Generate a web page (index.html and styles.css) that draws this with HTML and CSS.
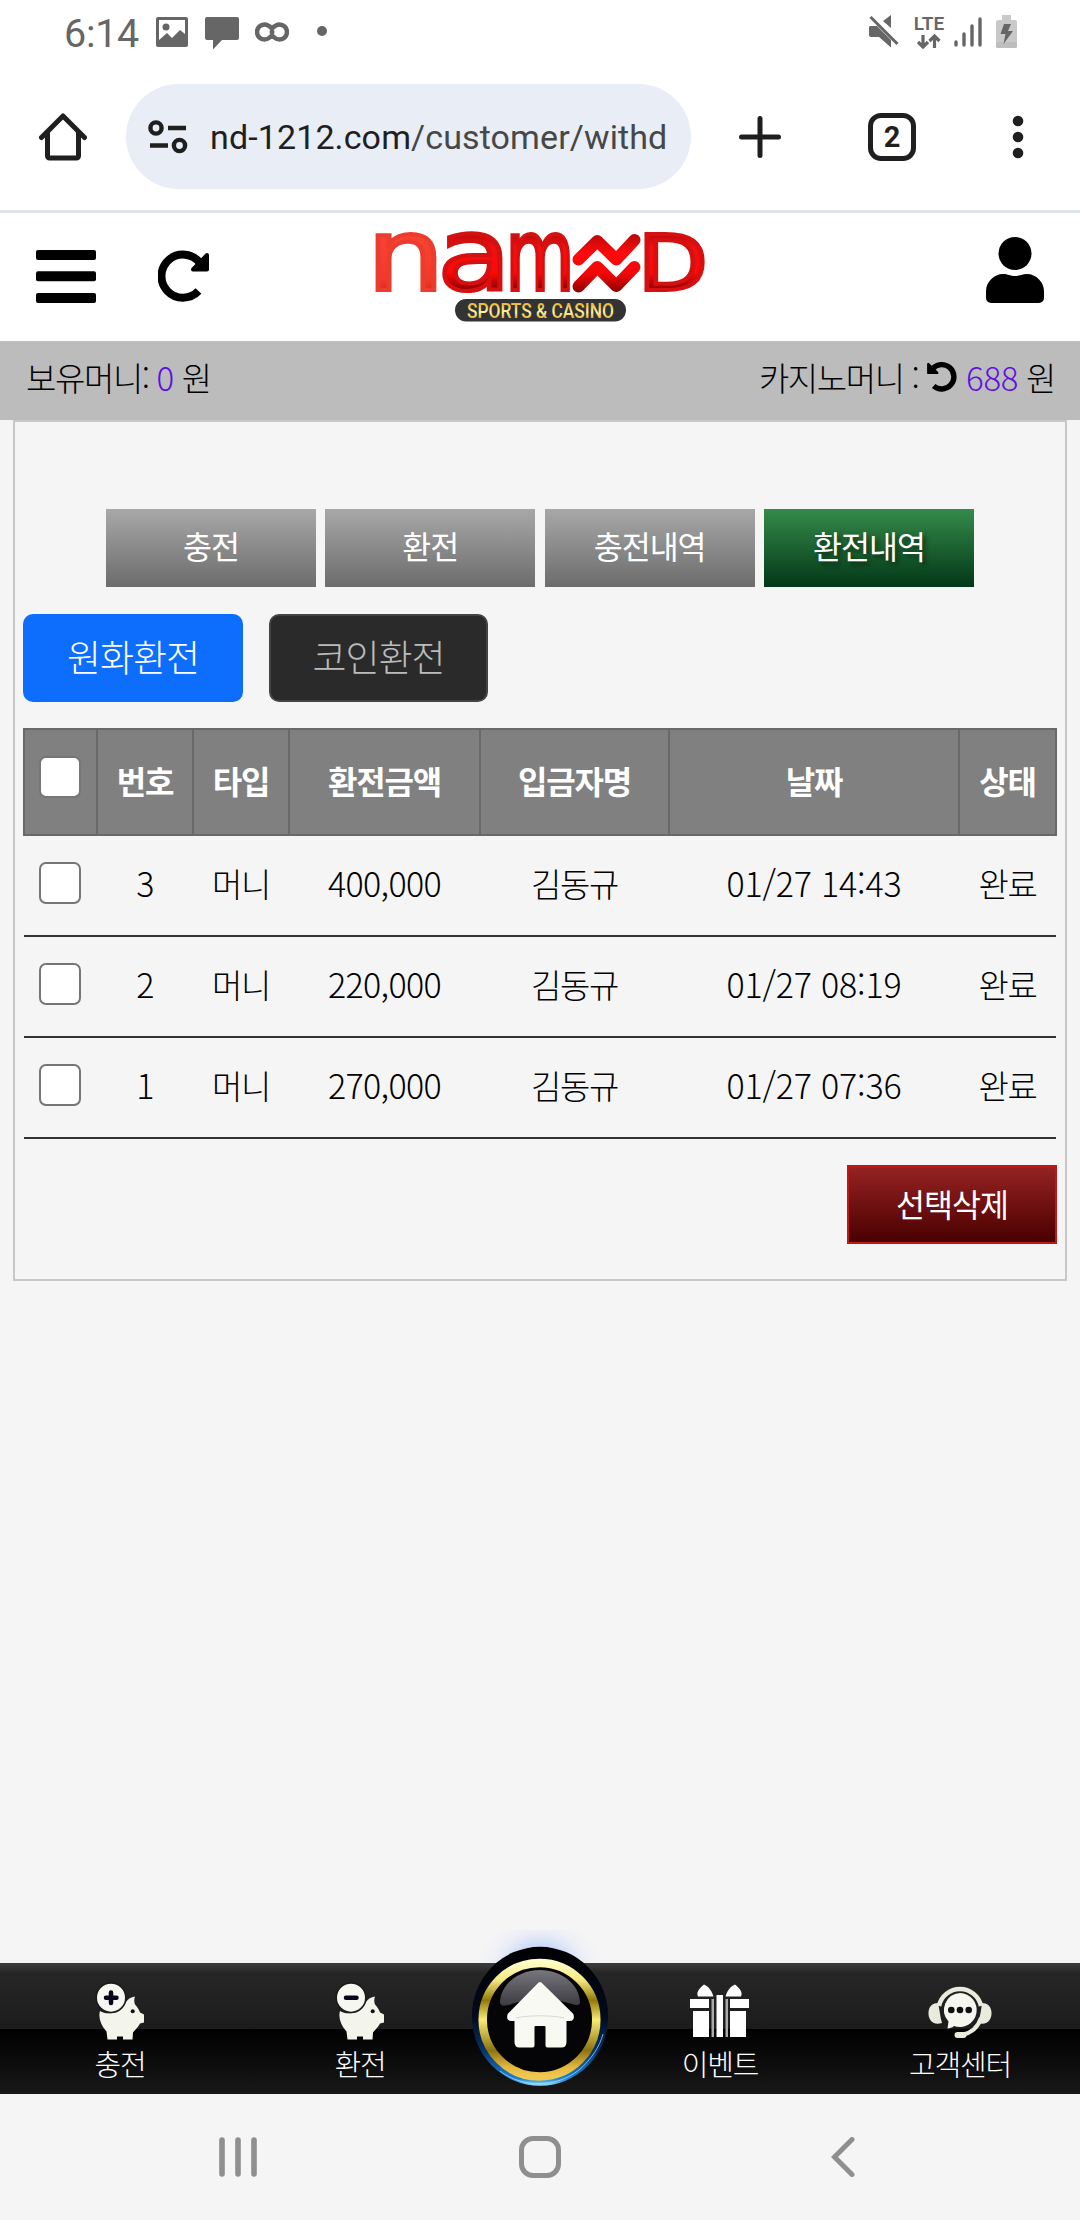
FILE: index.html
```html
<!DOCTYPE html>
<html lang="ko">
<head>
    <meta charset="UTF-8">
    <meta name="viewport" content="width=device-width, initial-scale=1.0">
    <title>환전내역</title>
    <link rel="stylesheet" href="styles.css">
</head>
<body>
    <div class="status-bar">
        <span class="clock">6:14</span>
        <svg class="st-photo" width="32" height="30" viewBox="0 0 32 30">
            <path fill="#666" fill-rule="evenodd" d="M2 0h28a2 2 0 0 1 2 2v26a2 2 0 0 1-2 2H2a2 2 0 0 1-2-2V2a2 2 0 0 1 2-2zM3 3v20l8-7 5 5 8-8 5 4V3z"/>
            <circle cx="10" cy="10" r="3.5" fill="#666"/>
        </svg>
        <svg class="st-chat" width="34" height="33" viewBox="0 0 34 33">
            <path fill="#666" d="M2 0h30a2 2 0 0 1 2 2v19a2 2 0 0 1-2 2H17L8 32.500V23H2a2 2 0 0 1-2-2V2a2 2 0 0 1 2-2z"/>
        </svg>
        <svg class="st-loop" width="34" height="20" viewBox="0 0 34 20">
            <path fill="none" stroke="#666" stroke-width="4.500" d="M17 6.500C14 3.500 12 2.500 9.500 2.500a7.500 7.500 0 0 0 0 15C12 17.500 14 16.500 17 13.500c3 3 5 4 7.500 4a7.500 7.500 0 0 0 0-15C22 2.500 20 3.500 17 6.500z"/>
            <circle cx="17" cy="10" r="2.500" fill="#666"/>
        </svg>
        <span class="st-dot"></span>
        <div class="status-right">
            <svg width="30" height="33" viewBox="0 0 30 33">
                <path fill="#666" d="M1 11h7l14 14v7.500L10 22H2a2 2 0 0 1-2-2v-8zM22 0v13L14 6z"/>
                <path stroke="#666" stroke-width="3" d="M1.500 2l27 27"/>
            </svg>
            <div class="lte">
                <span>LTE</span>
                <svg width="24" height="15" viewBox="0 0 24 15">
                    <path fill="none" stroke="#666" stroke-width="3.200" d="M6 1v11M1 8l5 5 5-5M17.500 14V3M12.500 7l5-5 5 5"/>
                </svg>
            </div>
            <svg class="st-signal" width="28" height="30" viewBox="0 0 28 30">
                <path stroke="#666" stroke-width="3.400" stroke-linecap="round" d="M2 25v3M10 17v11M18 9v19M26 2v26"/>
            </svg>
            <svg class="st-battery" width="21" height="33" viewBox="0 0 21 33">
                <path fill="#c9c9c9" d="M6 0h9v5h4a2 2 0 0 1 2 2v24a2 2 0 0 1-2 2H2a2 2 0 0 1-2-2V7a2 2 0 0 1 2-2h4z"/>
                <path fill="#bdbdbd" d="M0 27h21v4a2 2 0 0 1-2 2H2a2 2 0 0 1-2-2z"/>
                <path fill="#666" d="M8 9h7l-3 7h5L7.500 29 9.500 19H4.500z"/>
            </svg>
        </div>
    </div>

    <div class="browser-bar">
        <svg class="ic-home" width="48" height="48" viewBox="0 0 48 48">
            <path fill="none" stroke="#1f1f1f" stroke-width="5" stroke-linecap="round" stroke-linejoin="round" d="M2.500 24.500L24 3l21.500 21.500M8.500 20v23a2 2 0 0 0 2 2h27a2 2 0 0 0 2-2V20"/>
        </svg>
        <div class="url">
            <svg width="40" height="34" viewBox="0 0 40 34">
                <g fill="none" stroke="#1f1f1f" stroke-width="4.400">
                    <circle cx="8" cy="8" r="5.600"/>
                    <circle cx="31.500" cy="25.500" r="5.600"/>
                    <path d="M20 8h18M2 25.500h18"/>
                </g>
            </svg>
            <span class="url-text">nd-1212.com<span>/customer/withd</span></span>
        </div>
        <svg class="ic-plus" width="42" height="42" viewBox="0 0 42 42">
            <path stroke="#1f1f1f" stroke-width="5" stroke-linecap="round" d="M21 2.500v37M2.500 21h37"/>
        </svg>
        <div class="tab-count">2</div>
        <svg class="ic-more" width="12" height="44" viewBox="0 0 12 44">
            <g fill="#1f1f1f"><circle cx="6" cy="6" r="5.300"/><circle cx="6" cy="22" r="5.300"/><circle cx="6" cy="38" r="5.300"/></g>
        </svg>
    </div>

    <header class="header">
        <div class="header-left">
            <svg width="60" height="53" viewBox="0 0 60 53">
                <rect width="60" height="10" rx="2"/><rect y="21.300" width="60" height="10" rx="2"/><rect y="43" width="60" height="10" rx="2"/>
            </svg>
            <svg width="52" height="52" viewBox="0 0 52 52">
                <path fill="none" stroke="#000" stroke-width="8" d="M40.500 41A21.500 21.500 0 1 1 42 13"/>
                <path stroke="#000" stroke-width="4" stroke-linejoin="round" d="M49 5v14.500H35z"/>
            </svg>
        </div>
        <svg class="logo" width="360" height="110" viewBox="360 220 360 110">
            <defs>
                <linearGradient id="redN" x1="0" y1="0" x2="0" y2="1">
                    <stop offset="0" stop-color="#ff4a38"/><stop offset="0.700" stop-color="#f23a2a"/><stop offset="1" stop-color="#a80f0a"/>
                </linearGradient>
                <linearGradient id="red" gradientUnits="userSpaceOnUse" x1="0" y1="-58" x2="0" y2="0">
                    <stop offset="0" stop-color="#b50808"/><stop offset="0.250" stop-color="#f01010"/><stop offset="0.700" stop-color="#ff0808"/><stop offset="1" stop-color="#8c0000"/>
                </linearGradient>
                <linearGradient id="redWave" gradientUnits="userSpaceOnUse" x1="0" y1="233" x2="0" y2="292">
                    <stop offset="0" stop-color="#b50808"/><stop offset="0.350" stop-color="#ff0a0a"/><stop offset="0.700" stop-color="#f00808"/><stop offset="1" stop-color="#8c0000"/>
                </linearGradient>
                <linearGradient id="gold" x1="0" y1="0" x2="0" y2="1">
                    <stop offset="0.200" stop-color="#e8b93c"/><stop offset="0.550" stop-color="#fff6a8"/><stop offset="0.850" stop-color="#dca92f"/>
                </linearGradient>
            </defs>
            <g class="logo-letters">
                <text class="n" transform="translate(367 290) scale(1.230 1)">n</text>
                <text transform="translate(437.500 290) scale(1.210 1)">a</text>
                <text transform="translate(505.500 290) scale(0.715 1)">m</text>
                <text class="d" transform="translate(638 290) scale(1.190 1)">D</text>
            </g>
            <g fill="none" stroke="url(#redWave)" stroke-width="12" stroke-linecap="round" stroke-linejoin="round">
                <path d="M578.500 259.500L597.300 241l19 18.500L634.500 240"/>
                <path d="M578.500 286.500L597.300 267l19 19L634.500 267"/>
            </g>
            <rect x="455" y="299" width="171" height="22.500" rx="11.200" fill="#333"/>
            <text class="logo-sub" x="467" y="317.500" textLength="147" lengthAdjust="spacingAndGlyphs">SPORTS &amp; CASINO</text>
        </svg>
        <svg class="ic-user" width="58" height="66" viewBox="0 0 58 66">
            <circle cx="29" cy="16.500" r="16.500"/>
            <path d="M17 37c5 0 7 2 12 2s7-2 12-2c9 0 17 8 17 17v7a5 5 0 0 1-5 5H5a5 5 0 0 1-5-5v-7c0-9 8-17 17-17z"/>
        </svg>
    </header>

    <div class="money-bar">
        <div>보유머니: <b>0</b> 원</div>
        <div>카지노머니 :
            <svg width="32" height="31" viewBox="0 0 52 52">
                <g transform="translate(52 0) scale(-1 1)">
                    <path fill="none" stroke="#000" stroke-width="9" d="M40 42A20.500 20.500 0 1 1 42 13"/>
                    <path stroke="#000" stroke-width="4" stroke-linejoin="round" d="M49 5v15H34z"/>
                </g>
            </svg>
            <b>688</b> 원</div>
    </div>

    <main class="panel">
        <div class="menu">
            <a>충전</a>
            <a>환전</a>
            <a>충전내역</a>
            <a class="active">환전내역</a>
        </div>

        <div class="types">
            <button class="on">원화환전</button>
            <button>코인환전</button>
        </div>

        <table class="list">
            <colgroup>
                <col class="c-check"><col class="c-no"><col class="c-type"><col class="c-amount"><col class="c-name"><col class="c-date"><col class="c-state">
            </colgroup>
            <thead>
                <tr>
                    <th><span class="check"></span></th>
                    <th>번호</th>
                    <th>타입</th>
                    <th>환전금액</th>
                    <th>입금자명</th>
                    <th>날짜</th>
                    <th>상태</th>
                </tr>
            </thead>
            <tbody>
                <tr>
                    <td><span class="check"></span></td>
                    <td class="num">3</td>
                    <td>머니</td>
                    <td class="num">400,000</td>
                    <td>김동규</td>
                    <td class="date">01/27 14:43</td>
                    <td>완료</td>
                </tr>
                <tr>
                    <td><span class="check"></span></td>
                    <td class="num">2</td>
                    <td>머니</td>
                    <td class="num">220,000</td>
                    <td>김동규</td>
                    <td class="date">01/27 08:19</td>
                    <td>완료</td>
                </tr>
                <tr>
                    <td><span class="check"></span></td>
                    <td class="num">1</td>
                    <td>머니</td>
                    <td class="num">270,000</td>
                    <td>김동규</td>
                    <td class="date">01/27 07:36</td>
                    <td>완료</td>
                </tr>
            </tbody>
        </table>

        <button class="btn-delete">선택삭제</button>
    </main>

    <nav class="bottom-nav">
        <a>
            <svg width="50" height="58" viewBox="0 0 50 58">
                <path fill="#f3f4ec" d="M5 29c8 5 20 2 26-9 2-3 5-5 9-5.500-1 3-1 5 0 8 2 2 4 5 5 8l4 2v8l-4 1c-2 4-5 6-7 9l-.500 7H28v-3h-6v3h-9.500l-1-8C6 43 3 36 5 29z"/>
                <circle cx="37.700" cy="29.300" r="2" fill="#111"/>
                <circle cx="16" cy="15.700" r="14.800" fill="#f6f7f0" stroke="#1a1a1a" stroke-width="1.600"/>
                <path stroke="#05051c" stroke-width="4.500" stroke-linecap="round" d="M11 15.700h10.500M16 10.500V21"/>
            </svg>
            <span>충전</span>
        </a>
        <a>
            <svg width="50" height="58" viewBox="0 0 50 58">
                <path fill="#f3f4ec" d="M5 29c8 5 20 2 26-9 2-3 5-5 9-5.500-1 3-1 5 0 8 2 2 4 5 5 8l4 2v8l-4 1c-2 4-5 6-7 9l-.500 7H28v-3h-6v3h-9.500l-1-8C6 43 3 36 5 29z"/>
                <circle cx="37.700" cy="29.300" r="2" fill="#111"/>
                <circle cx="16" cy="15.700" r="14.800" fill="#f6f7f0" stroke="#1a1a1a" stroke-width="1.600"/>
                <path stroke="#05051c" stroke-width="4.500" stroke-linecap="round" d="M11 15.700h10.500"/>
            </svg>
            <span>환전</span>
        </a>
        <div class="nav-gap"></div>
        <a>
            <svg width="62" height="58" viewBox="0 0 62 58">
                <g fill="#fff">
                    <path d="M24.500 14.500H9c-2-4 1-8 6-12 5 2 8 7 9.500 12zM36.500 14.500H52c2-4-1-8-6-12-5 2-8 7-9.500 12z"/>
                    <path d="M1 17h19v9H1zM41 17h19v9H41zM4 29h16v26H4zM41 29h16v26H41z"/>
                    <path d="M27.500 13h6.500v42h-6.500z"/>
                </g>
                <path fill="#aaa" d="M22.500 17h2.500v38h-2.500zM36.500 17H39v38h-2.500z"/>
            </svg>
            <span>이벤트</span>
        </a>
        <a>
            <svg width="64" height="58" viewBox="0 0 64 58">
                <g fill="none" stroke="#e9ebdd">
                    <path stroke-width="4.500" d="M11 24a21.500 21.500 0 0 1 42 0"/>
                    <path stroke-width="4" d="M53 36c-3 9-9 15-19 17"/>
                    <path stroke-width="6" stroke-linecap="round" d="M29.500 53h6"/>
                </g>
                <path fill="#e9ebdd" d="M10 21c2 8 2 14 4 20-9 3-14-3-13.500-11C1 24 5 21 10 21zM54 21c-1 8-2 14-4 20 9 3 14-3 13.500-11C63 24 59 21 54 21z"/>
                <path fill="#f5f6ee" d="M32 11a17 17 0 1 1-6 33c-2 2-4 2-6.500 2.500l1-7A17 17 0 0 1 32 11z"/>
                <g fill="#111"><circle cx="23.300" cy="28" r="3.300"/><circle cx="32" cy="28" r="3.300"/><circle cx="40.700" cy="28" r="3.300"/></g>
            </svg>
            <span>고객센터</span>
        </a>

        <svg class="nav-home" width="200" height="164" viewBox="0 0 200 164">
            <defs>
                <radialGradient id="glow" gradientUnits="userSpaceOnUse" cx="100" cy="50" r="66">
                    <stop offset="0.450" stop-color="#7fa8ff" stop-opacity="0.450"/><stop offset="0.750" stop-color="#a9c2ff" stop-opacity="0.120"/><stop offset="1" stop-color="#c5d6ff" stop-opacity="0"/>
                </radialGradient>
                <linearGradient id="rim" x1="0" y1="0" x2="0" y2="1">
                    <stop offset="0" stop-color="#000"/><stop offset="0.500" stop-color="#020b1c"/><stop offset="0.750" stop-color="#06336c"/><stop offset="0.950" stop-color="#1c83d4"/><stop offset="1" stop-color="#9be4ff"/>
                </linearGradient>
                <linearGradient id="ring" x1="0" y1="0" x2="0" y2="1">
                    <stop offset="0" stop-color="#fffcc4"/><stop offset="0.150" stop-color="#f5ea80"/><stop offset="0.330" stop-color="#927808"/><stop offset="0.500" stop-color="#f8ec74"/><stop offset="0.770" stop-color="#8d7310"/><stop offset="0.920" stop-color="#e5b840"/><stop offset="1" stop-color="#f0c850"/>
                </linearGradient>
                <linearGradient id="shine" x1="0" y1="0" x2="0" y2="1">
                    <stop offset="0" stop-color="#77767c"/><stop offset="1" stop-color="#3c3b40"/>
                </linearGradient>
            </defs>
            <path fill="url(#glow)" d="M0 0h200v33H0z"/>
            <ellipse cx="100" cy="86.300" rx="68.200" ry="69.500" fill="url(#rim)"/>
            <path fill="none" stroke="#a8e8ff" stroke-width="1" stroke-opacity="0.700" d="M60 141c22 17 56 17 79-1 12-10 21-24 24-36"/>
            <circle cx="99.500" cy="89.700" r="56.800" fill="#050508" stroke="url(#ring)" stroke-width="8.500"/>
            <path fill="url(#shine)" d="M60 73c0-18 18-33 40-33s40 15 40 33c-2 6-14-4-40-4s-36 12-40 4z"/>
            <path fill="#f8f9f3" stroke="#f8f9f3" stroke-width="4" stroke-linejoin="round" d="M100 54L69.500 85c-1 3 0 4 2 4h5v23c0 2 1 3.500 3 3.500h13V97c0-2 1-3 3-3h9c2 0 3 1 3 3v18.500h14c2 0 3-1.500 3-3.500V89h5c2 0 3-1 2-4z"/>
            <path fill="none" stroke="#d8dad2" stroke-width="1.200" d="M76 88c14-3 34-3 48 0"/>
        </svg>
    </nav>

    <div class="system-nav">
        <svg width="38" height="40" viewBox="0 0 38 40">
            <path stroke="#8f8f8f" stroke-width="5.600" stroke-linecap="round" d="M3 3v34M19 3v34M35 3v34"/>
        </svg>
        <span class="sys-home"></span>
        <svg width="24" height="40" viewBox="0 0 24 40">
            <path fill="none" stroke="#8f8f8f" stroke-width="5" stroke-linecap="round" d="M21 2.500L3.500 20 21 37.500"/>
        </svg>
    </div>
</body>
</html>
```

FILE: styles.css
```css
* {
    box-sizing: border-box;
}
body {
    margin: 0;
    width: 1080px;
    height: 2220px;
    display: flex;
    flex-direction: column;
    overflow: hidden;
    background-color: #f5f5f5;
    font-family: "Noto Sans CJK KR", sans-serif;
    font-weight: 300;
    color: #000;
}
svg {
    display: block;
    flex: none;
}
button {
    font-family: inherit;
    font-weight: inherit;
    padding: 0;
}

/* phone status bar */
.status-bar {
    height: 63px;
    padding: 15px 63px 0 64px;
    display: flex;
    align-items: flex-start;
    background-color: #fff;
    font-family: Roboto, sans-serif;
    color: #666;
}
.clock {
    width: 92px;
    font-size: 39.500px;
    font-weight: 400;
    line-height: 37px;
    letter-spacing: -0.300px;
}
.st-photo {
    margin-top: 2px;
}
.st-chat {
    margin: 2px 0 0 17px;
}
.st-loop {
    margin: 7px 0 0 16px;
}
.st-dot {
    width: 10px;
    height: 10px;
    margin: 11px 0 0 28px;
    border-radius: 50%;
    background-color: #666;
}
.status-right {
    display: flex;
    margin-left: auto;
}
.lte {
    display: flex;
    flex-direction: column;
    align-items: center;
    width: 32px;
    margin: 1px 0 0 14px;
    font-size: 19px;
    font-weight: 600;
    line-height: 15px;
}
.lte svg {
    margin-top: 3px;
}
.st-signal {
    margin: 2px 0 0 9px;
}
.st-battery {
    margin-left: 14px;
}

/* browser toolbar */
.browser-bar {
    height: 150px;
    padding: 0 56px 0 39px;
    display: flex;
    align-items: center;
    background-color: #fff;
    border-bottom: 3px solid #dfe4ec;
}
.url {
    display: flex;
    align-items: center;
    width: 565px;
    height: 105px;
    margin-left: 39px;
    padding-left: 22px;
    border-radius: 53px;
    background-color: #e8edf6;
}
.url-text {
    margin-left: 22px;
    font-family: Roboto, sans-serif;
    font-size: 34px;
    font-weight: 400;
    letter-spacing: 0.120px;
    color: #1f1f1f;
    white-space: nowrap;
}
.url-text span {
    color: #474747;
}
.ic-plus {
    margin-left: 48px;
}
.tab-count {
    width: 48px;
    height: 48px;
    margin-left: 87px;
    border: 5px solid #1f1f1f;
    border-radius: 13px;
    font-family: Roboto, sans-serif;
    font-size: 29px;
    font-weight: 700;
    line-height: 39px;
    text-align: center;
    color: #1f1f1f;
}
.ic-more {
    margin-left: auto;
}

/* site header */
.header {
    height: 128px;
    padding: 0 36px;
    display: flex;
    justify-content: space-between;
    align-items: center;
    background-color: #fff;
}
.header-left {
    display: flex;
    align-items: center;
    gap: 62px;
    width: 186px;
}
.header-left svg {
    margin-top: -2px;
}
.logo {
    margin-top: -4px;
    overflow: visible;
}
.ic-user {
    margin: -15px 0 0 128px;
}
.logo-letters text {
    font-family: "DejaVu Sans", sans-serif;
    font-size: 99px;
    font-weight: 400;
    fill: url(#red);
    stroke: #d41010;
    stroke-width: 4px;
}
.logo-letters .n {
    fill: url(#redN);
    stroke: #ec3c2e;
}
.logo-letters .d {
    font-size: 76px;
}
.logo-sub {
    font-family: Roboto, sans-serif;
    font-size: 19.500px;
    font-weight: 500;
    fill: url(#gold);
}

.money-bar {
    height: 79px;
    padding: 0 25px 0 26px;
    display: flex;
    justify-content: space-between;
    background-color: #bcbcbc;
    font-size: 33px;
    line-height: 72px;
    letter-spacing: -1.400px;
}
.money-bar b {
    font-weight: 300;
    letter-spacing: -0.300px;
    color: #6010e0;
}
.money-bar svg {
    display: inline-block;
    vertical-align: -1px;
}

/* history panel */
.panel {
    width: 1054px;
    height: 861px;
    margin: 0 13px;
    padding: 87px 8px 0;
    border: 2px solid #c8c8c8;
    display: flex;
    flex-direction: column;
}
.menu {
    display: flex;
    justify-content: center;
    gap: 9.300px;
}
.menu a {
    width: 210px;
    height: 78px;
    background: linear-gradient(#a8a8a8, #6c6c6c);
    color: #fff;
    font-size: 31.500px;
    font-weight: 400;
    line-height: 72px;
    letter-spacing: -1px;
    text-align: center;
}
.menu a.active {
    background: linear-gradient(#358a4a, #023817);
    text-shadow: 3px 3px 5px rgba(0,0,0,0.5);
}
.types {
    display: flex;
    gap: 26px;
    margin: 27px 0 26px;
}
.types button {
    width: 219px;
    height: 88px;
    padding-bottom: 5px;
    border: 2px solid #444;
    border-radius: 10px;
    background-color: #2a2a2a;
    color: #bbb;
    font-size: 37px;
    line-height: 78px;
    letter-spacing: -1px;
}
.types .on {
    width: 220px;
    border-color: #0d6efd;
    background-color: #0d6efd;
    color: #fff;
}
.list {
    width: 1034px;
    table-layout: fixed;
    border-collapse: collapse;
    text-align: center;
}
.c-check { width: 73px; }
.c-no { width: 96px; }
.c-type { width: 96px; }
.c-amount { width: 191px; }
.c-name { width: 189px; }
.c-date { width: 290px; }
.c-state { width: 97px; }
.list th {
    height: 106px;
    padding: 0 0 5px;
    border: 2px solid #696969;
    background-color: #808080;
    color: #fff;
    font-size: 32px;
    font-weight: 600;
    letter-spacing: -1.200px;
    line-height: 40px;
}
.list td {
    height: 101px;
    padding: 0 0 5px;
    border-bottom: 2px solid #333;
    font-size: 33px;
    letter-spacing: -1.400px;
    line-height: 40px;
    white-space: nowrap;
}
.list .num {
    font-size: 34px;
    letter-spacing: -0.700px;
}
.list .date {
    font-size: 34px;
    letter-spacing: -0.200px;
}
.check {
    display: block;
    width: 42px;
    height: 42px;
    margin: 0 auto;
    border: 2px solid #767676;
    border-radius: 7px;
    background-color: #fff;
    position: relative;
    left: -1px;
}
.list th .check {
    margin-top: -5px;
}
.btn-delete {
    width: 210px;
    height: 79px;
    margin: 26px 0 0 auto;
    padding-bottom: 3px;
    border: 2px solid #c01818;
    background: linear-gradient(#962222, #4a0000);
    color: #fff;
    font-size: 31.500px;
    font-weight: 400;
    letter-spacing: -1px;
    line-height: 70px;
}

/* fixed menu at the bottom */
.bottom-nav {
    position: relative;
    display: flex;
    height: 131px;
    margin-top: auto;
    background: linear-gradient(#3c3c3c 0, #262626 10px, #1c1c1c 66px, #000 66px, #181818 131px);
}
.bottom-nav a {
    width: 240px;
    padding-top: 19px;
    display: flex;
    flex-direction: column;
    align-items: center;
    color: #fff;
    font-size: 29px;
    line-height: 34px;
    letter-spacing: -1.200px;
}
.bottom-nav span {
    margin-top: 6px;
}
.nav-gap {
    width: 120px;
}
.nav-home {
    position: absolute;
    left: 440px;
    top: -33px;
}

.system-nav {
    height: 126px;
    padding: 0 225px 0 219px;
    display: flex;
    justify-content: space-between;
    align-items: center;
}
.sys-home {
    width: 42px;
    height: 42px;
    margin-right: 8px;
    border: 5px solid #8f8f8f;
    border-radius: 14px;
}
```
